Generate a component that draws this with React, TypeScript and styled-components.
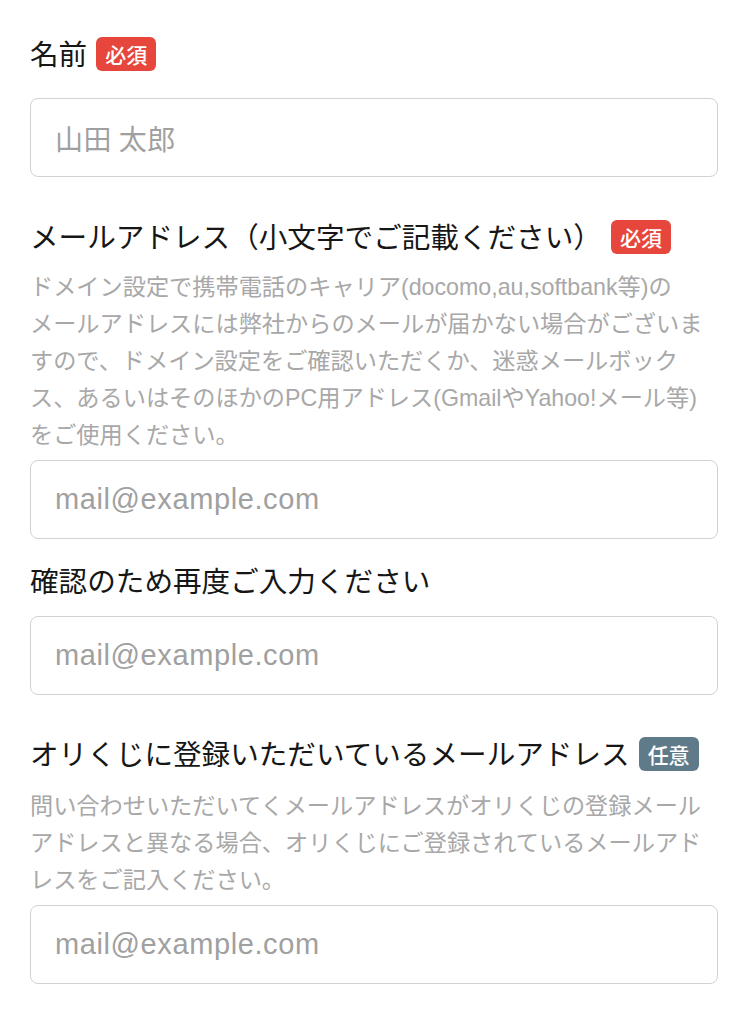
import React from 'react';
import styled, { createGlobalStyle } from 'styled-components';

const GlobalStyle = createGlobalStyle`
  html, body {
    margin: 0;
    padding: 0;
    background: #ffffff;
  }
  body {
    font-family: "Noto Sans CJK JP", "Noto Sans", sans-serif;
    color: #161616;
  }
`;

const Form = styled.form`
  width: 688px;
  padding: 37px 33px 40px 30px;
  display: flex;
  flex-direction: column;
`;

const Field = styled.div<{ $top: number }>`
  display: flex;
  flex-direction: column;
  margin-top: ${(p) => p.$top}px;
`;

const LabelRow = styled.div<{ $gap: number }>`
  height: 34px;
  display: flex;
  align-items: center;
  gap: 9px;
  margin-bottom: ${(p) => p.$gap}px;
`;

const LabelText = styled.label`
  font-size: 28.6px;
  line-height: 34px;
  color: #161616;
  white-space: nowrap;
  position: relative;
  top: -1px;
`;

const Badge = styled.span<{ $kind: 'required' | 'optional' }>`
  display: inline-flex;
  align-items: center;
  justify-content: center;
  height: 34px;
  padding: 0 9px;
  border-radius: 6px;
  background: ${(p) => (p.$kind === 'required' ? '#e6463c' : '#5f7b89')};
  color: #ffffff;
  font-size: 21px;
  font-weight: 500;
  line-height: 1;
`;

const Note = styled.p`
  margin: 0 0 6px;
  font-family: "Liberation Sans", "Noto Sans CJK JP", sans-serif;
  font-size: 23.2px;
  line-height: 37px;
  color: #a8a8a8;
`;

const NoteLine = styled.span`
  display: block;
  white-space: nowrap;
`;

const Input = styled.input<{ $latin?: boolean }>`
  box-sizing: border-box;
  width: 688px;
  height: 79px;
  margin: 0;
  padding: 0 24px;
  border: 1.5px solid #d2d2d2;
  border-radius: 8px;
  background: #ffffff;
  outline: none;
  font-family: ${(p) =>
    p.$latin
      ? '"Liberation Sans", Arial, sans-serif'
      : '"Noto Sans CJK JP", "Noto Sans", sans-serif'};
  font-size: ${(p) => (p.$latin ? '29px' : '28px')};
  letter-spacing: ${(p) => (p.$latin ? '0.6px' : '0.5px')};
  color: #161616;

  &::placeholder {
    color: #a0a0a0;
    opacity: 1;
  }
`;

type FieldDef = {
  label: string;
  badge?: 'required' | 'optional';
  note?: string[];
  placeholder: string;
  latin?: boolean;
  top: number;
  labelGap: number;
};

const fields: FieldDef[] = [
  {
    label: '名前',
    badge: 'required',
    placeholder: '山田 太郎',
    top: 0,
    labelGap: 27,
  },
  {
    label: 'メールアドレス（小文字でご記載ください）',
    badge: 'required',
    note: [
      'ドメイン設定で携帯電話のキャリア(docomo,au,softbank等)の',
      'メールアドレスには弊社からのメールが届かない場合がございま',
      'すので、ドメイン設定をご確認いただくか、迷惑メールボック',
      'ス、あるいはそのほかのPC用アドレス(GmailやYahoo!メール等)',
      'をご使用ください。',
    ],
    placeholder: 'mail@example.com',
    latin: true,
    top: 43,
    labelGap: 15,
  },
  {
    label: '確認のため再度ご入力ください',
    placeholder: 'mail@example.com',
    latin: true,
    top: 25,
    labelGap: 18,
  },
  {
    label: 'オリくじに登録いただいているメールアドレス',
    badge: 'optional',
    note: [
      '問い合わせいただいてくメールアドレスがオリくじの登録メール',
      'アドレスと異なる場合、オリくじにご登録されているメールアド',
      'レスをご記入ください。',
    ],
    placeholder: 'mail@example.com',
    latin: true,
    top: 42,
    labelGap: 17,
  },
];

export default function App() {
  return (
    <>
      <GlobalStyle />
      <Form onSubmit={(e) => e.preventDefault()}>
        {fields.map((f, i) => (
          <Field key={i} $top={f.top}>
            <LabelRow $gap={f.labelGap}>
              <LabelText htmlFor={`field-${i}`}>{f.label}</LabelText>
              {f.badge && (
                <Badge $kind={f.badge}>{f.badge === 'required' ? '必須' : '任意'}</Badge>
              )}
            </LabelRow>
            {f.note && (
              <Note>
                {f.note.map((line, j) => (
                  <NoteLine key={j}>{line}</NoteLine>
                ))}
              </Note>
            )}
            <Input id={`field-${i}`} placeholder={f.placeholder} $latin={f.latin} />
          </Field>
        ))}
      </Form>
    </>
  );
}
